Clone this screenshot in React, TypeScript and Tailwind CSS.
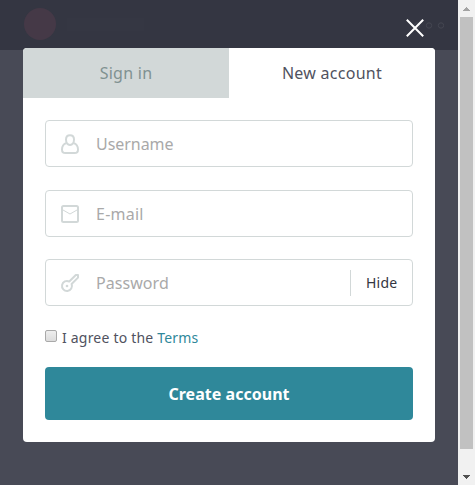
import { useState } from 'react';
import type { ReactNode } from 'react';

interface FieldProps {
  type: string;
  placeholder: string;
  icon: ReactNode;
  className?: string;
  inputClass: string;
  children?: ReactNode;
}

function Field({ type, placeholder, icon, className = '', inputClass, children }: FieldProps) {
  return (
    <div className={`flex h-[47px] items-center rounded-[4px] border border-[#d2d8d8] bg-white ${className}`}>
      <span className="ml-[14px] h-5 w-5 shrink-0">{icon}</span>
      <input
        type={type}
        placeholder={placeholder}
        className={`ml-4 h-full min-w-0 flex-1 bg-transparent text-[16px] text-[#2b3e51] outline-none placeholder:text-[#a9a9a9] ${inputClass}`}
      />
      {children}
    </div>
  );
}

function UserIcon() {
  return (
    <svg width="20" height="20" viewBox="0 0 20 20" fill="none" stroke="#d2d8d8" strokeWidth="2">
      <path d="M6.300 9.200C3.800 9.700 2 12.400 2 15.400 2 17.700 3.300 19 5.400 19h9.200c2.100 0 3.400-1.300 3.400-3.600 0-3-1.800-5.700-4.300-6.200" />
      <path d="M10 1.200c2.500 0 4 1.900 4 4.400 0 2.900-1.500 5.300-4 5.300s-4-2.400-4-5.300c0-2.500 1.500-4.400 4-4.400z" />
    </svg>
  );
}

function MailIcon() {
  return (
    <svg width="20" height="20" viewBox="0 0 20 20" fill="none" stroke="#d2d8d8">
      <rect x="2" y="2" width="16" height="16" rx="1.500" strokeWidth="2" />
      <path d="M3 6l7 4 7-4" strokeWidth="1" />
    </svg>
  );
}

function KeyIcon() {
  return (
    <svg width="20" height="20" viewBox="0 0 20 20" fill="none" stroke="#d2d8d8" strokeWidth="2">
      <path d="M9.300 8.500L15.800 2H18v2.600L11.600 11a5 5 0 1 1-2.300-2.500z" strokeLinejoin="round" />
      <circle cx="7" cy="13" r="1.300" fill="#d2d8d8" stroke="none" />
    </svg>
  );
}

function Scrollbar() {
  return (
    <div className="flex h-full w-[17px] flex-col items-center bg-[#f1f1f1]">
      <div className="flex h-[17px] items-center justify-center">
        <svg width="8" height="4" viewBox="0 0 8 4" fill="#a3a3a3" shapeRendering="crispEdges">
          <path d="M3 0h1v1h1v1h1v1h1v1H0V3h1V2h1V1h1z" />
        </svg>
      </div>
      <div className="h-[432px] w-[13px] bg-[#c1c1c1]" />
      <div className="mt-auto flex h-[17px] items-center justify-center">
        <svg width="8" height="4" viewBox="0 0 8 4" fill="#505050" shapeRendering="crispEdges">
          <path d="M0 0h7v1H6v1H5v1H4v1H3V3H2V2H1V1H0z" />
        </svg>
      </div>
    </div>
  );
}

export default function App() {
  const [showPassword, setShowPassword] = useState(true);

  return (
    <div className="flex h-[485px] w-[475px] overflow-hidden font-['Noto_Sans','Open_Sans',sans-serif]">
      <div className="relative h-full w-[458px] bg-[#484a56]">
        {/* Page header, dimmed by the overlay */}
        <header className="flex h-[50px] items-center justify-between bg-[#343642] pr-[14px] pl-6">
          <div className="flex items-center">
            <div className="-mt-[2px] h-8 w-8 rounded-full bg-[#453947]" />
            <div className="-mt-[2px] ml-[11px] h-[13px] w-[77px] bg-[#353743]" />
          </div>
          <svg width="30" height="7" viewBox="0 0 30 7" fill="none" stroke="#454752">
            <circle cx="3" cy="3.500" r="2.700" />
            <circle cx="15" cy="3.500" r="2.700" />
            <circle cx="27" cy="3.500" r="2.700" />
          </svg>
        </header>

        <button type="button" aria-label="Close" className="absolute top-[19px] left-[406px]">
          <svg width="18" height="18" viewBox="0 0 18 18" fill="none" stroke="#fff" strokeWidth="2">
            <path d="M0.800 0.800l16.400 16.400M17.200 0.800L0.800 17.200" />
          </svg>
        </button>

        {/* Modal */}
        <div className="absolute top-12 left-[23px] h-[394px] w-[412px] overflow-hidden rounded-[4px] bg-white">
          <div className="grid h-[50px] grid-cols-2 text-[16px]">
            <button type="button" className="bg-[#d2d8d8] tracking-[0.25px] text-[#809191]">Sign in</button>
            <button type="button" className="bg-white tracking-[0.27px] text-[#505260]">New account</button>
          </div>

          <form className="flex flex-col px-[22px] pt-[22px]">
            <Field type="text" placeholder="Username" icon={<UserIcon />} inputClass="tracking-[-0.05px]" />
            <Field type="email" placeholder="E-mail" icon={<MailIcon />} className="mt-[23px]" inputClass="tracking-[0.25px]" />
            <Field
              type={showPassword ? 'text' : 'password'}
              placeholder="Password"
              icon={<KeyIcon />}
              className="mt-[22px]"
              inputClass="tracking-[0.05px]"
            >
              <button
                type="button"
                onClick={() => setShowPassword(!showPassword)}
                className="flex h-[26px] w-[62px] items-center border-l border-[#d2d8d8] pl-[15px] text-[14px] tracking-[0.2px] text-[#343642]"
              >
                {showPassword ? 'Hide' : 'Show'}
              </button>
            </Field>

            <label className="mt-[21px] flex h-5 items-center text-[14px] tracking-[0.2px] text-[#505260]">
              <input
                type="checkbox"
                className="-mt-[2px] mr-[5px] h-3 w-3 appearance-none rounded-[2px] border border-[#a9a9a9] bg-linear-to-b from-[#eeeeee] to-[#dcdcdc]"
              />
              <span>
                I agree to the <a href="#0" className="text-[#2f889a]">Terms</a>
              </span>
            </label>

            <button
              type="submit"
              className="mt-[20px] h-[53px] rounded-[4px] bg-[#2f889a] text-[16px] font-bold tracking-[0.03px] text-white"
            >
              Create account
            </button>
          </form>
        </div>
      </div>
      <Scrollbar />
    </div>
  );
}
